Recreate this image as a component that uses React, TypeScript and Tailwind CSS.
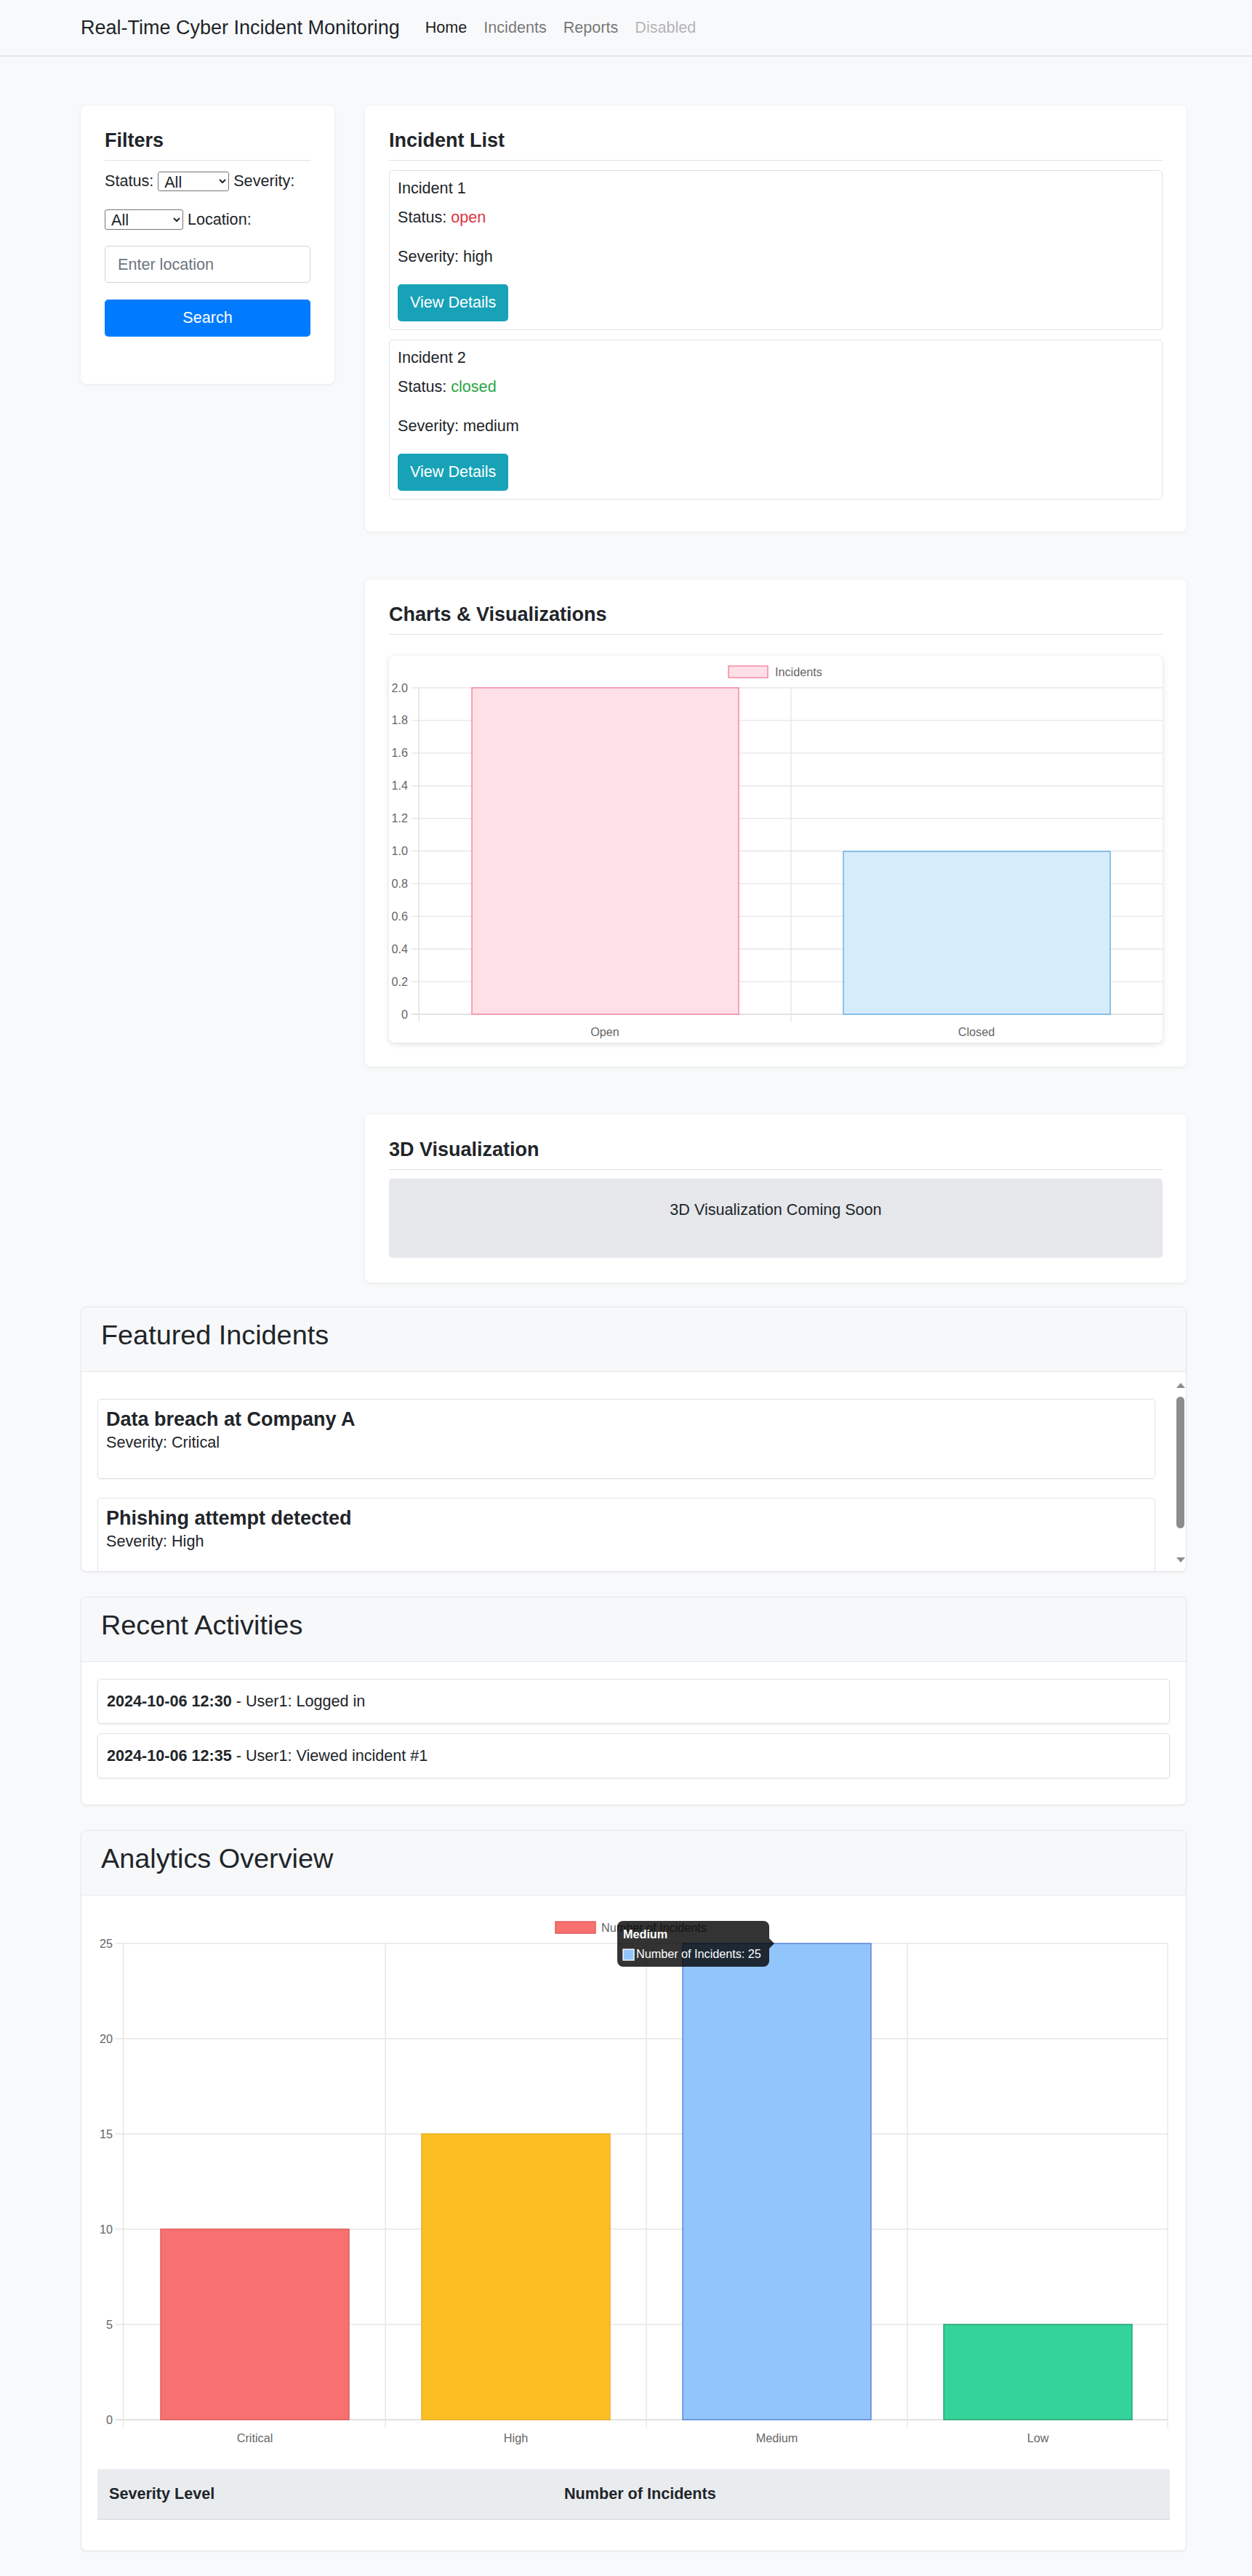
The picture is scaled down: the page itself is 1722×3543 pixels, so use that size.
import React from "react"

const cardShadow = "shadow-[0_1px_5px_rgba(0,0,0,0.07)]"

function CardTitle({ text, mb = "mb-[12px]" }: { text: string; mb?: string }) {
  return (
    <h4 className={`text-[27px] font-bold leading-[32px] pb-[11px] border-b border-[#dee2e6] ${mb}`}>{text}</h4>
  )
}

function NavBar() {
  return (
    <nav className="h-[78px] bg-[#f8f9fa] border-b-2 border-[#e2e5e9] flex items-center pl-[111px]">
      <span className="text-[27px] text-[#212529] mr-[35px]">Real-Time Cyber Incident Monitoring</span>
      <ul className="flex gap-[23px] text-[21.6px]">
        <li className="text-[rgba(0,0,0,0.9)]">Home</li>
        <li className="text-[rgba(0,0,0,0.55)]">Incidents</li>
        <li className="text-[rgba(0,0,0,0.55)]">Reports</li>
        <li className="text-[rgba(0,0,0,0.3)]">Disabled</li>
      </ul>
    </nav>
  )
}

function Filters() {
  return (
    <div className={`w-[349px] self-start rounded-[8px] bg-white px-[33px] pt-[32px] pb-[65px] ${cardShadow}`}>
      <CardTitle text="Filters" />
      <div className="flex h-[32px] items-center gap-[6px] text-[21.6px]">
        <span>Status:</span>
        <select className="h-[27px] w-[98px] border border-[#767676] rounded-[3px] pl-[4px] leading-none text-[21.6px] bg-white">
          <option>All</option>
          <option>Open</option>
          <option>Closed</option>
        </select>
        <span>Severity:</span>
      </div>
      <div className="mt-[21px] flex h-[32px] items-center gap-[6px] text-[21.6px]">
        <select className="h-[28px] w-[108px] border border-[#767676] rounded-[3px] pl-[4px] leading-none text-[21.6px] bg-white">
          <option>All</option>
          <option>High</option>
          <option>Medium</option>
        </select>
        <span>Location:</span>
      </div>
      <input
        className="mt-[20px] block h-[51px] w-full rounded-[5px] border border-[#ced4da] bg-white px-[17px] text-[21.6px] placeholder:text-[#6c757d]"
        placeholder="Enter location"
      />
      <button className="mt-[23px] block h-[51px] w-full rounded-[5px] bg-[#007bff] text-[21.6px] text-white">Search</button>
    </div>
  )
}

function IncidentBox({ name, status, severity }: { name: string; status: string; severity: string }) {
  const color = status == "open" ? "text-[#dc3545]" : "text-[#28a745]"
  return (
    <div className="border border-[#dee2e6] rounded-[5px] p-[11px] mb-[13px] text-[21.6px]">
      <p className="leading-[26px]">{name}</p>
      <p className="mt-[11px] leading-[32px]">Status: <span className={color}>{status}</span></p>
      <p className="mt-[22px] leading-[32px]">Severity: {severity}</p>
      <button className="mt-[22px] h-[51px] rounded-[5px] bg-[#17a2b8] px-[17px] text-white">View Details</button>
    </div>
  )
}

function IncidentList() {
  return (
    <div className={`rounded-[8px] bg-white px-[33px] pt-[32px] pb-[31px] ${cardShadow}`}>
      <CardTitle text="Incident List" mb="mb-[13px]" />
      <IncidentBox name="Incident 1" status="open" severity="high" />
      <IncidentBox name="Incident 2" status="closed" severity="medium" />
    </div>
  )
}

function StatusChart() {
  const ys = [2.0, 1.8, 1.6, 1.4, 1.2, 1.0, 0.8, 0.6, 0.4, 0.2, 0]
  const top = 44
  const step = 44.9
  return (
    <svg width="1064" height="532" viewBox="0 0 1064 532">
      <rect x="467" y="14" width="54" height="16" fill="#ffe0e6" stroke="#f27f9b" strokeWidth="1.35" />
      <text x="531" y="28" fontSize="16.2" fill="#666">Incidents</text>
      {ys.map((v, i) => (
        <g key={i}>
          <line x1="31" x2="1064" y1={top + i * step} y2={top + i * step} stroke={i == 10 ? "#d9d9d9" : "#e6e6e6"} strokeWidth="1.35" />
          <text x="26" y={top + i * step + 5.5} fontSize="16.2" fill="#666" textAnchor="end">
            {v == 0 ? "0" : v.toFixed(1)}
          </text>
        </g>
      ))}
      <line x1="41" x2="41" y1="44" y2="504" stroke="#e0e0e0" strokeWidth="1.35" />
      <line x1="553" x2="553" y1="44" y2="504" stroke="#e6e6e6" strokeWidth="1.35" />
      <rect x="114" y="44" width="367" height="449" fill="#ffe0e6" stroke="#f27f9b" strokeWidth="1.35" />
      <rect x="625" y="269" width="367" height="224" fill="#d7ecfb" stroke="#5aaee0" strokeWidth="1.35" />
      <text x="297" y="523" fontSize="16.2" fill="#666" textAnchor="middle">Open</text>
      <text x="808" y="523" fontSize="16.2" fill="#666" textAnchor="middle">Closed</text>
    </svg>
  )
}

function ChartsCard() {
  return (
    <div className={`rounded-[8px] bg-white px-[33px] pt-[32px] pb-[33px] ${cardShadow}`}>
      <CardTitle text="Charts & Visualizations" mb="mb-[29px]" />
      <div className="h-[532px] rounded-[8px] bg-white shadow-[0_2px_8px_rgba(0,0,0,0.13)]">
        <StatusChart />
      </div>
    </div>
  )
}

function ThreeDCard() {
  return (
    <div className={`rounded-[8px] bg-white px-[33px] pt-[32px] pb-[34px] ${cardShadow}`}>
      <CardTitle text="3D Visualization" />
      <div className="h-[109px] rounded-[5px] bg-[#e5e7eb] pt-[27px] text-center text-[21.6px] leading-[32px]">
        3D Visualization Coming Soon
      </div>
    </div>
  )
}

function SectionCard({ title, children }: { title: string; children: React.ReactNode }) {
  return (
    <div className="rounded-[8px] border border-[#e4e6e9] bg-white shadow-[0_1px_3px_rgba(0,0,0,0.05)] overflow-hidden">
      <div className="bg-[#f7f8f9] border-b border-[#e4e6e9] px-[27px] pt-[16px] pb-[16px]">
        <h2 className="text-[37.8px] leading-[45px] font-normal mb-[11px]">{title}</h2>
      </div>
      {children}
    </div>
  )
}

// scroll track drawn by hand, the screenshot browser hides real scrollbars
function ScrollTrack() {
  return (
    <div className="flex w-[15px] flex-col items-center pt-[15px]">
      <div className="h-0 w-0 border-x-[6px] border-b-[7px] border-x-transparent border-b-[#8c8c8c]" />
      <div className="mt-[12px] h-[181px] w-[11px] rounded-full bg-[#8c8c8c]" />
      <div className="mt-[40px] h-0 w-0 border-x-[6px] border-t-[7px] border-x-transparent border-t-[#8c8c8c]" />
    </div>
  )
}

function Featured() {
  const items = [
    { title: "Data breach at Company A", severity: "Critical" },
    { title: "Phishing attempt detected", severity: "High" },
  ]
  return (
    <SectionCard title="Featured Incidents">
      <div className="flex h-[274px]">
        <div className="flex-1 overflow-hidden pl-[22px] pr-[27px] pt-[37px]">
          {items.map((it) => (
            <div key={it.title} className="mb-[26px] rounded-[5px] border border-[#dee2e6] p-[11px] shadow-[0_1px_2px_rgba(0,0,0,0.05)]">
              <h5 className="text-[27px] font-bold leading-[32px]">{it.title}</h5>
              <p className="text-[21.6px] leading-[32px] mb-[22px]">Severity: {it.severity}</p>
            </div>
          ))}
        </div>
        <ScrollTrack />
      </div>
    </SectionCard>
  )
}

function Recent() {
  const acts = [
    { time: "2024-10-06 12:30", text: "User1: Logged in" },
    { time: "2024-10-06 12:35", text: "User1: Viewed incident #1" },
  ]
  return (
    <SectionCard title="Recent Activities">
      <div className="px-[22px] pt-[23px] pb-[23px]">
        {acts.map((a) => (
          <div key={a.time} className="mb-[13px] rounded-[5px] border border-[#dee2e6] px-[12px] py-[14px] text-[21.6px] leading-[32px] shadow-[0_1px_3px_rgba(0,0,0,0.08)]">
            <strong>{a.time}</strong> - {a.text}
          </div>
        ))}
      </div>
    </SectionCard>
  )
}

function SeverityChart() {
  const ticks = [25, 20, 15, 10, 5, 0]
  const bars = [
    { label: "Critical", v: 10, fill: "#f87171", stroke: "#e05252", x: 87 },
    { label: "High", v: 15, fill: "#fbbf24", stroke: "#e8a917", x: 446 },
    { label: "Medium", v: 25, fill: "#93c5fd", stroke: "#4f7fd6", x: 805 },
    { label: "Low", v: 5, fill: "#34d399", stroke: "#1f9e72", x: 1164 },
  ]
  const y0 = 698
  const unit = (698 - 43) / 25
  return (
    <svg width="1474" height="743" viewBox="0 0 1474 743">
      <rect x="630" y="13" width="55" height="16" fill="#f87171" stroke="#e05252" strokeWidth="1.35" />
      <text x="693" y="27" fontSize="16.2" fill="#666">Number of Incidents</text>
      {ticks.map((t, i) => {
        const y = 43 + i * 131
        return (
          <g key={t}>
            <line x1="25" x2="1472" y1={y} y2={y} stroke={t == 0 ? "#d9d9d9" : "#e6e6e6"} strokeWidth="1.35" />
            <text x="21" y={y + 5.5} fontSize="16.2" fill="#666" textAnchor="end">{t}</text>
          </g>
        )
      })}
      {[35.6, 396, 755, 1114, 1472].map((x) => (
        <line key={x} x1={x} x2={x} y1="43" y2="709" stroke="#e6e6e6" strokeWidth="1.35" />
      ))}
      {bars.map((b) => (
        <g key={b.label}>
          <rect x={b.x} y={y0 - b.v * unit} width="259" height={b.v * unit} fill={b.fill} stroke={b.stroke} strokeWidth="1.35" />
          <text x={b.x + 129.5} y="729" fontSize="16.2" fill="#666" textAnchor="middle">{b.label}</text>
        </g>
      ))}
      <rect x="715" y="12" width="209" height="63" rx="8" fill="rgba(0,0,0,0.8)" />
      <polygon points="924,36 931,43 924,50" fill="rgba(0,0,0,0.8)" />
      <text x="723" y="36" fontSize="16.2" fontWeight="bold" fill="#fff">Medium</text>
      <rect x="723" y="51" width="15" height="15" fill="#93c5fd" stroke="#fff" strokeWidth="1.35" />
      <text x="741" y="63" fontSize="16.2" fill="#fff">Number of Incidents: 25</text>
    </svg>
  )
}

function Analytics() {
  return (
    <SectionCard title="Analytics Overview">
      <div className="px-[22px] pt-[23px] pb-[42px]">
        <div className="h-[743px]">
          <SeverityChart />
        </div>
        <table className="mt-[23px] w-full table-fixed text-left text-[21.6px]">
          <thead>
            <tr className="h-[69px] bg-[#e9ecef] border-b-2 border-[#dee2e6]">
              <th className="w-[626px] px-[16px] font-bold">Severity Level</th>
              <th className="px-[16px] font-bold">Number of Incidents</th>
            </tr>
          </thead>
          <tbody></tbody>
        </table>
      </div>
    </SectionCard>
  )
}

export default function App() {
  return (
    <div className="min-h-screen bg-[#f8f9fa] text-[#212529] font-['Liberation_Sans',Arial,sans-serif]">
      <NavBar />
      <main className="ml-[111px] w-[1521px] pt-[67px] pb-[34px]">
        <div className="flex gap-[42px]">
          <Filters />
          <div className="flex w-[1130px] flex-col gap-[66px]">
            <IncidentList />
            <ChartsCard />
            <ThreeDCard />
          </div>
        </div>
        <div className="mt-[33px] flex flex-col gap-[34px]">
          <Featured />
          <Recent />
          <Analytics />
        </div>
      </main>
    </div>
  )
}
